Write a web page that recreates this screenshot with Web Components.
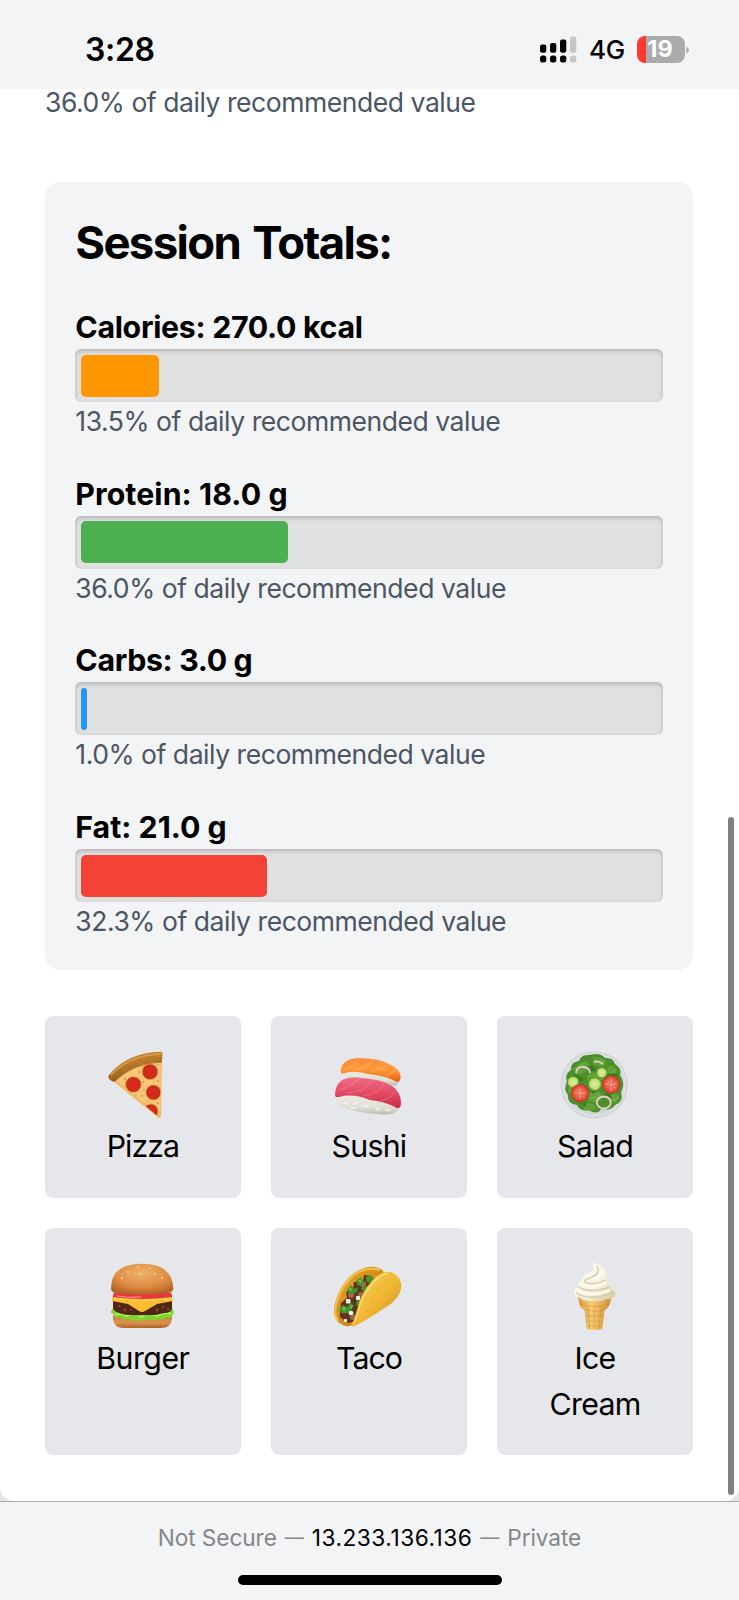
<!DOCTYPE html>
<html lang="en">
<head>
<meta charset="utf-8">
<title>Session Totals</title>
<style>
html{font-size:30.318px}
body{margin:0;width:739px;height:1600px;overflow:hidden;background:#f3f4f6;font-family:Inter,"Liberation Sans",sans-serif;color:#000}
</style>
</head>
<body>
<phone-screen>
  <status-bar slot="top"></status-bar>
  <daily-note>36.0% of daily recommended value</daily-note>
  <totals-card heading="Session Totals:">
    <nutrient-meter label="Calories: 270.0 kcal" percent="13.5" color="#ff9800" style="--ls:-.3px"></nutrient-meter>
    <nutrient-meter label="Protein: 18.0 g" percent="36.0" color="#4caf50" style="--ls:.08px"></nutrient-meter>
    <nutrient-meter label="Carbs: 3.0 g" percent="1.0" color="#2196f3" style="--ls:-.33px"></nutrient-meter>
    <nutrient-meter label="Fat: 21.0 g" percent="32.3" color="#f44336" style="--ls:0px"></nutrient-meter>
  </totals-card>
  <food-grid>
    <food-tile name="Pizza" style="--ls:-.95px"><svg viewBox="0 0 72 72"><defs><linearGradient id="pc" x1="0" y1="0" x2=".4" y2="1"><stop stop-color="#c98a36"/><stop offset=".5" stop-color="#b8792b"/><stop offset="1" stop-color="#8f5518"/></linearGradient><radialGradient id="pp"><stop stop-color="#d9291c"/><stop offset=".75" stop-color="#d02a1b"/><stop offset="1" stop-color="#b92f17"/></radialGradient><clipPath id="pcl"><path d="M8 33Q24 15 54 12L53 70Z"/></clipPath></defs><path d="M6 33Q24 12 55 11L54 68Q53.500 71 51 69.500Z" fill="#f2b863"/><path d="M9 33Q25 17 54 14L53 67Z" fill="#f6c77a"/><path d="M1.500 27.500Q20 4.500 54 3.800Q55.800 4 55.500 6L55 14Q26 14 7 34Q0 31 1.500 27.500Z" fill="url(#pc)"/><path d="M4 27Q22 7 54 6" fill="none" stroke="#e0aa58" stroke-width="2" opacity=".65"/><path d="M8 33Q26 15 55 14" fill="none" stroke="#7e4811" stroke-width="1" opacity=".6"/><g clip-path="url(#pcl)" fill="url(#pp)" stroke="#e89545" stroke-width=".8"><circle cx="43" cy="23.800" r="7.800"/><circle cx="26.400" cy="36.500" r="7.800"/><circle cx="46.400" cy="44.500" r="7.500"/><circle cx="44" cy="63" r="7"/></g><g fill="#df9138"><circle cx="32" cy="24" r="1"/><circle cx="18" cy="31" r="1"/><circle cx="36" cy="34" r="1"/><circle cx="51" cy="33" r="1"/><circle cx="35" cy="48" r="1"/><circle cx="51" cy="55" r="1"/><circle cx="41" cy="53" r=".8"/><circle cx="51" cy="17" r=".8"/><circle cx="29" cy="47" r=".8"/><circle cx="37" cy="42" r=".8"/></g></svg></food-tile>
    <food-tile name="Sushi" style="--ls:-.75px"><svg viewBox="0 0 72 72"><defs><linearGradient id="ss" x1="0" y1="0" x2="0" y2="1"><stop stop-color="#f98a3c"/><stop offset=".45" stop-color="#ff9b3a"/><stop offset="1" stop-color="#ec5f10"/></linearGradient><linearGradient id="st" x1="0" y1="0" x2="0" y2="1"><stop stop-color="#ee6d85"/><stop offset=".55" stop-color="#e24761"/><stop offset="1" stop-color="#c82a44"/></linearGradient><linearGradient id="sr" x1="0" y1="0" x2="0" y2="1"><stop stop-color="#f1f1ea"/><stop offset=".7" stop-color="#deded5"/><stop offset="1" stop-color="#b9bab0"/></linearGradient></defs><path d="M8 23Q7 29 13 31L62 38Q67 36 65 29L35 20Z" fill="url(#sr)"/><path d="M7.800 24Q7 19 12 14Q18 9.500 29 10.200Q45 10 57 16.500Q67 21 67.700 29Q67.500 34 64 34Q51 27 35 26Q20 22 10 25.500Q8.500 26 7.800 24Z" fill="url(#ss)"/><g fill="none" stroke="#ffc27c" stroke-width="1.100" opacity=".5"><path d="M12 22Q20 18 26 11M23 22Q34 20 40 12M37 24Q48 23 53 16M52 28Q59 27 62 21"/></g><path d="M3 46Q2 56 8 59Q25 65 45 66Q60 68 65 62L66 54L35 44Z" fill="url(#sr)"/><path d="M2 47Q2 37 9 32Q17 28 29 30Q48 31 59 38Q68 44 68 55Q68 61 64 60Q51 53 37 52Q20 45 6 49Q2 50 2 47Z" fill="url(#st)"/><g fill="none" stroke="#f99aaa" stroke-width="1.100" opacity=".4"><path d="M6 42Q18 39 26 31M15 45Q31 44 39 33M30 48Q44 47 51 36M47 53Q58 51 62 43"/></g><g fill="#fff" opacity=".45"><ellipse cx="13" cy="55" rx="3" ry="1.500"/><ellipse cx="23" cy="55" rx="3" ry="1.500"/><ellipse cx="33" cy="58" rx="3" ry="1.500"/><ellipse cx="45" cy="61" rx="3" ry="1.500"/><ellipse cx="20" cy="60" rx="3" ry="1.300"/><ellipse cx="55" cy="62" rx="3" ry="1.500"/></g></svg></food-tile>
    <food-tile name="Salad" style="--ls:-.65px"><svg viewBox="0 0 72 72"><defs><radialGradient id="lp"><stop offset=".75" stop-color="#c3c9cb"/><stop offset=".93" stop-color="#dfe2e4"/><stop offset="1" stop-color="#c8ccd0"/></radialGradient><radialGradient id="lt"><stop stop-color="#f5b39c"/><stop offset=".25" stop-color="#ec7259"/><stop offset=".75" stop-color="#e0523c"/><stop offset="1" stop-color="#bd2e20"/></radialGradient><radialGradient id="lc"><stop stop-color="#e0f0a0"/><stop offset=".7" stop-color="#c2e079"/><stop offset="1" stop-color="#7eb63a"/></radialGradient></defs><circle cx="35.100" cy="36.800" r="33.600" fill="url(#lp)"/><path d="M12 22Q11 14 20 13Q22 6 31 7Q41 4 46 10Q54 9 56 16Q63 20 61 27Q67 36 62 44Q65 54 56 57Q51 64 43 60Q38 68 30 62Q21 64 18 57Q8 56 9 47Q4 41 8 34Q5 26 12 22Z" fill="#4c8f2b"/><g fill="#62a238"><path d="M16 20Q25 10 31 17Q27 27 18 26ZM34 9Q46 8 47 17Q40 20 34 16ZM50 18Q59 17 57 27Q50 29 47 24ZM28 28Q37 20 44 31Q37 37 29 33ZM30 45Q42 40 44 49Q36 58 29 52ZM57 45Q63 49 57 55Q50 54 51 48ZM24 56Q35 53 37 60Q31 65 25 61ZM9 39Q16 38 17 44Q12 48 9 44Z"/></g><g fill="#3a7d20"><path d="M28 18Q35 17 37 22L29 25ZM47 27Q53 23 60 27L55 31ZM30 39Q37 42 42 40L34 46ZM47 45Q54 45 52 52L45 48ZM16 53Q24 58 28 53L27 59ZM15 26Q21 29 26 31L20 35Z"/></g><g fill="none" stroke="#9bcb68" stroke-width=".7" opacity=".7"><path d="M14 22Q22 19 28 13M36 14Q43 15 47 12M31 32Q37 31 41 26M31 50Q37 51 41 46M51 25Q55 25 57 21M54 53Q58 52 60 47"/></g><g fill="url(#lc)" stroke="#5e982c" stroke-width="1"><circle cx="14.100" cy="34.100" r="5.900"/><circle cx="35.800" cy="36.100" r="6.600"/><circle cx="42.700" cy="24.800" r="5.400"/></g><g fill="url(#lt)"><circle cx="21.100" cy="45.100" r="9.200"/><circle cx="52.100" cy="36.500" r="9.200"/></g><g stroke="#ffc5a7" stroke-width="1" opacity=".75" stroke-linecap="round"><path d="M21 40v2M21 48v2M16 45h2M24 45h2M18 42l1 1M24 48l1 1M52 31v2M52 40v2M47 36h2M55 36h2M49 33l1 1M55 39l1 1"/></g><g fill="none" stroke="#e9cfc7" stroke-width="1.800"><ellipse cx="44.800" cy="54.500" rx="7" ry="6"/><path d="M17 25Q18 18 25 19Q31 20 31 25M35 14Q39 12 44 16"/></g></svg></food-tile>
    <food-tile name="Burger" style="--ls:-.5px"><svg viewBox="0 0 72 72"><defs><radialGradient id="bb" cx=".5" cy=".3" r=".75"><stop stop-color="#efb26a"/><stop offset=".6" stop-color="#dd8c42"/><stop offset="1" stop-color="#ad5f21"/></radialGradient><linearGradient id="b2" x1="0" y1="0" x2="0" y2="1"><stop stop-color="#c87b35"/><stop offset=".6" stop-color="#dc9350"/><stop offset="1" stop-color="#ad6325"/></linearGradient></defs><path d="M6 55H65V59Q64 68 54 68H17Q7 68 6 59Z" fill="url(#b2)"/><path d="M5 50Q7 43 14 43H58Q65 43 66 50Q68 54 65 55Q64 60 60 57Q56 61 51 59Q46 62 42 59Q37 62 31 60Q26 62 22 59Q16 61 13 57Q7 59 7 54Q2 53 5 50Z" fill="#7bd72f"/><path d="M8 55Q14 52 19 56Q27 52 34 57Q43 52 50 56Q58 51 64 54" fill="none" stroke="#b7f35f" stroke-width="1.500"/><path d="M6 40H65V48Q65 53 57 53Q48 56 35 55Q20 56 12 53Q5 51 6 46Z" fill="#502514"/><g fill="#7d4226"><circle cx="12" cy="46" r="1.500"/><circle cx="18" cy="50" r="1.700"/><circle cx="24" cy="50" r="1.300"/><circle cx="50" cy="50" r="1.700"/><circle cx="56" cy="47" r="1.500"/><circle cx="61" cy="49" r="1.500"/></g><path d="M6 35H65V40H6Z" fill="#b61f15"/><path d="M6.500 33Q35 30 64.500 33V38Q50 40 35 39Q20 40 6.500 38Z" fill="#e5393f"/><path d="M10 36Q20 38 34 37" stroke="#ff9384" stroke-width="1" fill="none"/><path d="M5 37Q35 41 65 37L66 41L50 44L38 51Q35 53 32 51L21 44L5 41Z" fill="#ffbd2e"/><path d="M6 39Q35 42 65 39" stroke="#ffd96a" stroke-width="1" fill="none"/><path d="M4 29Q4 11 19 6Q35 1.500 51 6Q66 12 66.400 29Q65 33.500 59 33Q35 36 11 33Q5 33.500 4 29Z" fill="url(#bb)"/><g fill="#f9d8a0"><ellipse cx="31" cy="7" rx="1.300" ry=".8"/><ellipse cx="21" cy="12" rx=".8" ry="1.300"/><ellipse cx="33" cy="14" rx=".8" ry="1.300"/><ellipse cx="43" cy="8" rx="1.300" ry=".8"/><ellipse cx="48" cy="14" rx="1.300" ry=".8"/><ellipse cx="55" cy="18" rx=".8" ry="1.300"/><ellipse cx="15" cy="18" rx=".8" ry="1.200"/></g></svg></food-tile>
    <food-tile name="Taco" style="--ls:-1px"><svg viewBox="0 0 72 72"><defs><linearGradient id="tf" x1="0" y1="0" x2="1" y2="1"><stop stop-color="#fbd45a"/><stop offset=".55" stop-color="#efb632"/><stop offset="1" stop-color="#c98516"/></linearGradient><linearGradient id="tb" x1="0" y1="0" x2="1" y2="1"><stop stop-color="#e9aa2c"/><stop offset="1" stop-color="#b97213"/></linearGradient></defs><path d="M5 62Q-1 55 2 43Q7 24 21 13Q35 4 46 8Q53 11 51 18L24 63Q15 70 5 62Z" fill="url(#tb)"/><path d="M5 61Q0 53 4 41Q9 25 22 14Q35 6 47 10" fill="none" stroke="#f5c04b" stroke-width="2"/><path d="M7 51L8 43L14 38L13 32L20 29L21 22L30 21L31 15L38 16L41 19L44 22L27 60L15 63L7 57Z" fill="#61341f"/><g fill="#9b6948"><circle cx="18" cy="35" r="3"/><circle cx="30" cy="24" r="3"/><circle cx="11" cy="51" r="2.500"/><circle cx="20" cy="57" r="3"/><circle cx="28" cy="35" r="3"/></g><g fill="#43962c"><path d="M14 30L18 25L21 29L25 27L24 32L19 34L16 33ZM24 20L28 17L30 21L28 26L24 25ZM33 17L38 15L40 20L36 23L33 21ZM6 49L10 45L14 47L18 43L21 46L18 50L22 53L17 55L12 52L8 53ZM24 40L28 39L27 45L23 46ZM28 28L33 25L34 30L30 32Z"/></g><g fill="#80c54c"><path d="M15 29L18 28L19 31ZM25 21L28 19L28 23ZM9 47L13 48L11 51ZM17 46L20 45L18 49Z"/></g><g fill="#f2f4ec"><rect x="13" y="39" width="4.500" height="4.500" rx="1"/><rect x="23" y="36" width="4" height="4" rx="1"/><rect x="16" y="51" width="4" height="4" rx="1"/><rect x="11" y="59" width="3" height="3" rx="1"/></g><path d="M18 66Q22 59 24 50Q27 37 34 27Q44 12 55 11.500Q65 13 68 23Q70 33 59 43Q45 53 24 65Q20 67 18 66Z" fill="url(#tf)"/><path d="M20 64Q24 57 26 48Q29 37 36 28Q46 14 55 13.500" fill="none" stroke="#ffe28a" stroke-width="1.300" opacity=".8"/><g fill="#dc9c22" opacity=".5"><circle cx="45" cy="29" r="1"/><circle cx="54" cy="22" r="1"/><circle cx="39" cy="42" r="1"/><circle cx="56" cy="34" r="1"/><circle cx="34" cy="51" r="1"/></g></svg></food-tile>
    <food-tile name="Ice Cream" style="--ls:-.7px"><svg viewBox="0 0 72 72"><defs><linearGradient id="ic" x1="0" y1="0" x2="1" y2="0"><stop stop-color="#d99835"/><stop offset=".4" stop-color="#f6cb74"/><stop offset="1" stop-color="#d18a2b"/></linearGradient><linearGradient id="iw" x1="0" y1="0" x2="1" y2="1"><stop stop-color="#fffef8"/><stop offset=".6" stop-color="#f6f1dd"/><stop offset="1" stop-color="#cfc49d"/></linearGradient></defs><path d="M19 36H53L51 43Q49 49 45.500 50L43.500 68Q43 70 35 70Q28 70 27.500 68L25.500 50Q21 48 20 43Z" fill="url(#ic)"/><g fill="none" stroke="#c48528" stroke-width=".8" opacity=".55"><path d="M21 44Q36 49 51 44M25 50Q35 53 46 50M27 56H45M27 61H44M28 66H43M29 47L31 69M35 48V69M42 47L40 69"/></g><path d="M32 3Q43 3 47 12Q49 18 46 21Q52 23 51 28Q57 30 56.500 35Q54 40 48 39Q43 42 36 41Q26 42 21 38Q14 36 15 31Q16 28 20 27Q18 22 23 20Q24 14 32 12Q38 9 32 3Z" fill="url(#iw)"/><g fill="none" stroke="#cbbd91" stroke-width="1.300" opacity=".85"><path d="M38 6Q42 13 33 17Q24 20 26 22Q35 26 46 20M20 27Q29 34 51 27M17 33Q32 42 55 32"/></g><g fill="none" stroke="#fff" stroke-width="1.500"><path d="M43 10Q44 16 35 19M24 25Q35 29 47 23M19 31Q34 38 51 30"/></g></svg></food-tile>
  </food-grid>
  <scroll-thumb slot="overlay"></scroll-thumb>
  <address-bar slot="bottom"></address-bar>
</phone-screen>
<script>
const define=(name,html,setup)=>customElements.define(name,class extends HTMLElement{
  constructor(){super();this.attachShadow({mode:'open'})}
  connectedCallback(){const t=document.createElement('template');t.innerHTML=html;this.shadowRoot.replaceChildren(t.content.cloneNode(true));if(setup)setup(this,this.shadowRoot)}
});
define('phone-screen',`<style>
:host{display:flex;flex-direction:column;width:739px;height:1600px;position:relative;background:#f3f4f6}
main{flex:none;height:1412px;box-sizing:border-box;background:#fff;border-radius:0 0 14px 14px;padding:0 46px 0 45px;display:flex;flex-direction:column}
.page{background:#e5e5e7}
::slotted(daily-note){margin:-6.300px 0 61.700px}
</style><slot name="top"></slot><div class="page"><main><slot></slot></main></div><slot name="overlay"></slot><slot name="bottom"></slot>`);
define('status-bar',`<style>
:host{display:flex;flex:none;height:89px;box-sizing:border-box;align-items:center;padding:10px 50px 0 85px;background:#f3f4f6}
time{font-size:32px;font-weight:600;line-height:40px;letter-spacing:-.3px;flex:1}
.net{font-size:26px;font-weight:450;line-height:30px;margin:1px 12px 0 12px;letter-spacing:-.3px}
.bat{width:48px;height:26.500px;border-radius:8px;background:linear-gradient(90deg,#ff3b30 9px,#aaabad 9px);color:#fff;font-size:23.500px;font-weight:700;line-height:26.500px;text-align:center;text-indent:-2px}
svg{display:block}
</style><time>3:28</time><svg width="38" height="28" viewBox="0 0 38 28"><g><rect x="1" y="8.500" width="6.300" height="8.300" rx="2"/><rect x="11" y="7" width="6.300" height="9.800" rx="2"/><rect x="21" y="3.500" width="6.300" height="13.300" rx="2"/><rect x="31" y="0.500" width="6.300" height="16.300" rx="2" fill="#c5c6c8"/><rect x="1" y="19.500" width="6.300" height="7" rx="2.500"/><rect x="11" y="19.500" width="6.300" height="7" rx="2.500"/><rect x="21" y="19.500" width="6.300" height="7" rx="2.500"/><rect x="31" y="19.500" width="6.300" height="7" rx="2.500" fill="#c5c6c8"/></g></svg><span class="net">4G</span><div class="bat">19</div><svg width="4" height="8" viewBox="0 0 4 8"><path d="M1.200 .5Q4 2 4 4T1.200 7.500Z" fill="#aaabad"/></svg>`);
define('daily-note',`<style>:host{display:block;box-sizing:border-box;height:1.25rem;padding-top:1px;font-size:.875rem;line-height:1.25rem;letter-spacing:-.45px;color:#4b5563;white-space:nowrap}</style><slot></slot>`);
define('totals-card',`<style>
:host{display:flex;flex-direction:column;gap:1rem;background:#f3f4f6;border-radius:.5rem;padding:1rem}
h2{margin:0;font-size:1.5rem;line-height:2rem;height:2rem;box-sizing:border-box;font-weight:700;white-space:nowrap;letter-spacing:-1.650px;word-spacing:3px}
</style><h2></h2><slot></slot>`,(h,r)=>r.querySelector('h2').textContent=h.getAttribute('heading'));
define('nutrient-meter',`<style>
:host{display:block}
.label{font-size:1rem;height:1.5rem;box-sizing:border-box;padding-top:1.500px;line-height:1.5rem;font-weight:650;white-space:nowrap;letter-spacing:var(--ls)}
.track{height:1.75rem;box-sizing:border-box;padding:5.500px;border-radius:6px;background:#e0e0e0;box-shadow:inset 0 2px 4px rgba(0,0,0,.2)}
.fill{height:100%;border-radius:5px}
</style><div class="label"></div><div class="track"><div class="fill"></div></div><daily-note></daily-note>`,(h,r)=>{
  const p=h.getAttribute('percent'),f=r.querySelector('.fill');
  r.querySelector('.label').textContent=h.getAttribute('label');
  f.style.width=p+'%';f.style.background=h.getAttribute('color');
  r.querySelector('daily-note').textContent=p+'% of daily recommended value';
});
define('food-grid',`<style>:host{display:grid;grid-template-columns:repeat(3,1fr);gap:1rem;margin-top:1.5rem}</style><slot></slot>`);
define('food-tile',`<style>
:host{display:flex;flex-direction:column;align-items:center;padding:1rem;border-radius:8px;background:#e5e7eb;box-sizing:border-box;min-width:0}
.icon{height:2.5rem;display:flex;align-items:center}
::slotted(svg){display:block;width:72px;height:72px}
.name{font-size:1rem;line-height:1.5rem;padding-top:2px;margin-bottom:-2px;text-align:center;width:min-content;letter-spacing:var(--ls)}
</style><div class="icon"><slot></slot></div><div class="name"></div>`,(h,r)=>r.querySelector('.name').textContent=h.getAttribute('name'));
define('scroll-thumb',`<style>:host{position:absolute;left:727.500px;top:817px;width:6px;height:678px;border-radius:3px;background:#7f7f80}</style>`);
define('address-bar',`<style>
:host{display:flex;flex-direction:column;align-items:center;flex:1;box-sizing:border-box;border-top:1px solid #aeaeb0;background:#f3f4f6}
.line{display:flex;gap:8px;margin-top:20px;font-size:22.700px;line-height:32px;color:#85868a;white-space:nowrap;letter-spacing:-.1px}
b{font-weight:400;color:#000;letter-spacing:.5px}
.dash{font-size:19px}
.home{width:264px;height:10px;border-radius:5px;background:#000;margin-top:21px}
</style><div class="line"><span>Not Secure</span><span class="dash">—</span><b>13.233.136.136</b><span class="dash">—</span><span>Private</span></div><div class="home"></div>`);
</script>
</body>
</html>
